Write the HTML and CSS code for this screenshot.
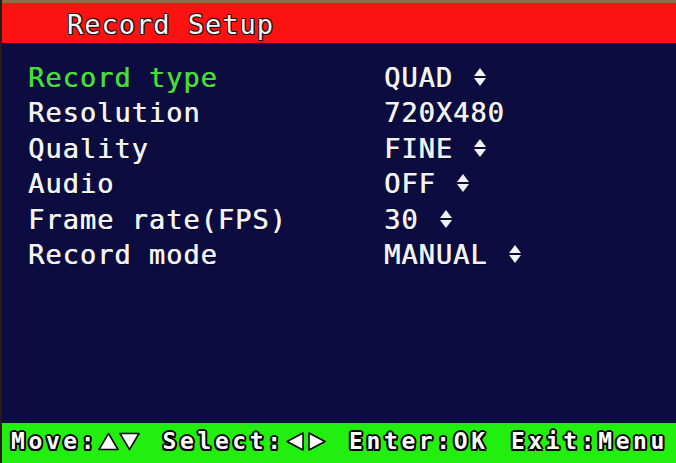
FILE: index.html
```html
<!DOCTYPE html>
<html lang="en">
  <head>
    <meta charset="UTF-8" />
    <meta name="viewport" content="width=device-width, initial-scale=1.0" />
    <title>Record Setup</title>
    <link rel="stylesheet" href="styles.css">
  </head>
  <body>
    <div class="screen">
      <div class="top-strip"></div>
      <div class="header">Record Setup</div>

      <div class="menu">
        <div class="row active">
          <span class="label">Record type</span>
          <span class="value">QUAD<svg class="updown" width="12" height="18" viewBox="0 0 12 18"><polygon points="6,0 12,8 0,8" /><polygon points="0,10 12,10 6,18" /></svg></span>
        </div>
        <div class="row">
          <span class="label">Resolution</span>
          <span class="value">720X480</span>
        </div>
        <div class="row">
          <span class="label">Quality</span>
          <span class="value">FINE<svg class="updown" width="12" height="18" viewBox="0 0 12 18"><polygon points="6,0 12,8 0,8" /><polygon points="0,10 12,10 6,18" /></svg></span>
        </div>
        <div class="row">
          <span class="label">Audio</span>
          <span class="value">OFF<svg class="updown" width="12" height="18" viewBox="0 0 12 18"><polygon points="6,0 12,8 0,8" /><polygon points="0,10 12,10 6,18" /></svg></span>
        </div>
        <div class="row">
          <span class="label">Frame rate(FPS)</span>
          <span class="value">30<svg class="updown" width="12" height="18" viewBox="0 0 12 18"><polygon points="6,0 12,8 0,8" /><polygon points="0,10 12,10 6,18" /></svg></span>
        </div>
        <div class="row">
          <span class="label">Record mode</span>
          <span class="value">MANUAL<svg class="updown" width="12" height="18" viewBox="0 0 12 18"><polygon points="6,0 12,8 0,8" /><polygon points="0,10 12,10 6,18" /></svg></span>
        </div>
      </div>

      <div class="footer">
        <span class="hint">Move:<svg class="tri" width="21" height="19" viewBox="0 0 21 19"><polygon points="10.5,1.5 20,17.5 1,17.5" /></svg><svg class="tri" width="21" height="19" viewBox="0 0 21 19"><polygon points="1,1.5 20,1.5 10.5,17.5" /></svg></span>
        <span class="hint">Select:<svg class="tri" width="21" height="19" viewBox="0 0 21 19"><polygon points="2,9.5 18,1 18,18" /></svg><svg class="tri" width="21" height="19" viewBox="0 0 21 19"><polygon points="3,1 19,9.5 3,18" /></svg></span>
        <span class="hint">Enter:OK</span>
        <span class="hint">Exit:Menu</span>
      </div>
    </div>
  </body>
</html>
```

FILE: styles.css
```css
body {
  margin: 0;
  background: #0c0c40;
  font-family: "DejaVu Sans Mono", "Liberation Mono", monospace;
}
.screen {
  width: 676px;
  height: 463px;
  display: flex;
  flex-direction: column;
  background: #0c0c40;
  border-left: 2px solid #2a1c14;
  box-sizing: border-box;
}
.top-strip {
  height: 3px;
  background: #8c6c4a;
}
.header {
  height: 40px;
  box-sizing: border-box;
  padding: 2px 0 0 65px;
  background: #fd1212;
  color: #f4f4f4;
  font-size: 27px;
  line-height: 40px;
  letter-spacing: 1px;
  text-shadow: 1px 1px 0 #201010, -1px -1px 0 #201010, 1px -1px 0 #201010, -1px 1px 0 #201010,
    0.5px 0 0 #f4f4f4;
}
.menu {
  flex: 1;
  padding: 17px 0 0 26px;
}
.row {
  display: grid;
  grid-template-columns: 356px auto;
  height: 35.4px;
  line-height: 35.4px;
  font-size: 27px;
  letter-spacing: 1px;
  color: #f2f2f2;
  text-shadow: 0.5px 0 0 currentColor, 1px 1px 0 #050520;
}
.row.active .label {
  color: #46dc3a;
}
.updown {
  margin-left: 21px;
  vertical-align: 1px;
  fill: #f2f2f2;
}
.footer {
  height: 40px;
  display: flex;
  justify-content: space-between;
  padding: 0 8px 0 9px;
  background: #22ee10;
  color: #ffffff;
  font-size: 23px;
  font-weight: bold;
  line-height: 36px;
  letter-spacing: 3.6px;
  text-shadow: 2px 0 0 #000, -2px 0 0 #000, 0 2px 0 #000, 0 -2px 0 #000,
    1.5px 1.5px 0 #000, -1.5px -1.5px 0 #000, 1.5px -1.5px 0 #000, -1.5px 1.5px 0 #000;
}
.hint {
  white-space: nowrap;
}
.tri {
  vertical-align: -2px;
  fill: #ffffff;
  stroke: #000000;
  stroke-width: 1.5;
  stroke-linejoin: round;
}
```
